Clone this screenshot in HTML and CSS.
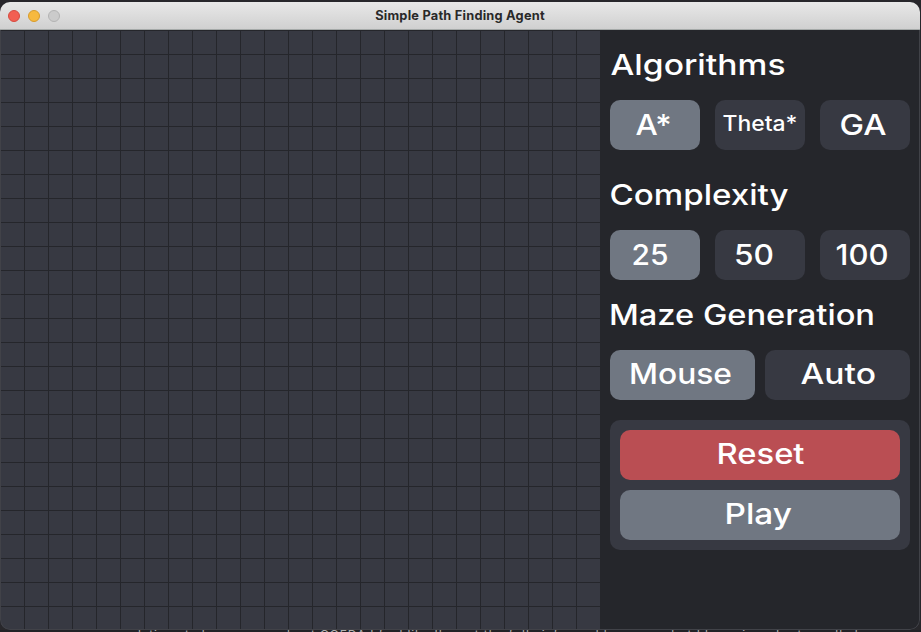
FILE: index.html
```html
<!DOCTYPE html>
<html lang="en">
<head>
<meta charset="utf-8">
<title>Simple Path Finding Agent</title>
<link rel="stylesheet" href="styles.css">
</head>
<body>
<div class="window">
  <header class="titlebar">
    <div class="lights"><i class="light close"></i><i class="light minimize"></i><i class="light"></i></div>
    <h1>Simple Path Finding Agent</h1>
  </header>
  <main>
    <div class="maze"></div>
    <aside>
      <svg class="heading"><text x="0.5" y="45" textLength="175" lengthAdjust="spacingAndGlyphs">Algorithms</text></svg>
      <div class="row">
        <button class="active"><svg><text x="25.5" y="35" textLength="36" lengthAdjust="spacingAndGlyphs">A*</text></svg></button>
        <button><svg class="small"><text x="7.5" y="31" textLength="75" lengthAdjust="spacingAndGlyphs">Theta*</text></svg></button>
        <button><svg><text x="19.5" y="35" textLength="47" lengthAdjust="spacingAndGlyphs">GA</text></svg></button>
      </div>
      <svg class="heading tall"><text x="-0.5" y="55" textLength="179" lengthAdjust="spacingAndGlyphs">Complexity</text></svg>
      <div class="row">
        <button class="active"><svg><text x="21.5" y="35" textLength="37" lengthAdjust="spacingAndGlyphs">25</text></svg></button>
        <button><svg><text x="19" y="35" textLength="40" lengthAdjust="spacingAndGlyphs">50</text></svg></button>
        <button><svg><text x="15.5" y="35" textLength="53" lengthAdjust="spacingAndGlyphs">100</text></svg></button>
      </div>
      <svg class="heading"><text x="-1" y="45" textLength="266" lengthAdjust="spacingAndGlyphs">Maze Generation</text></svg>
      <div class="row pair">
        <button class="active"><svg><text x="19" y="34" textLength="103" lengthAdjust="spacingAndGlyphs">Mouse</text></svg></button>
        <button><svg><text x="35.5" y="34" textLength="75.5" lengthAdjust="spacingAndGlyphs">Auto</text></svg></button>
      </div>
      <div class="actions">
        <button class="reset"><svg><text x="96.5" y="34" textLength="88" lengthAdjust="spacingAndGlyphs">Reset</text></svg></button>
        <button class="active"><svg><text x="104.5" y="34" textLength="67.5" lengthAdjust="spacingAndGlyphs">Play</text></svg></button>
      </div>
    </aside>
  </main>
</div>
<div class="behind"><svg><text x="125" y="9" textLength="190">relations to how we are about</text><text x="320" y="9" textLength="567">GGEDA I feel like I'm not the fully informed here now, but I learn in order to really learn</text></svg></div>
</body>
</html>
```
FILE: styles.css
```css
* { box-sizing: border-box; }
body {
  margin: 0;
  width: 921px;
  height: 632px;
  padding-top: 2px;
  overflow: hidden;
  background: #28272b;
  font-family: Inter, "Liberation Sans", sans-serif;
}
.window {
  width: 920px;
  height: 628px;
  border-radius: 10px;
  overflow: hidden;
  background: #25262b;
  position: relative;
}
.window::after {
  content: "";
  position: absolute;
  inset: 28px 0 0;
  border: 1px solid #414248;
  border-top: 0;
  border-radius: 0 0 10px 10px;
}
.titlebar {
  height: 28px;
  display: grid;
  grid-template-columns: 60px 1fr 60px;
  align-items: center;
  background: linear-gradient(#e8e8e8, #d0d0d0);
  border-bottom: 1px solid #a5a9a8;
}
.lights { display: flex; gap: 8px; padding-left: 8px; }
.light {
  flex: none;
  width: 12px;
  height: 12px;
  border-radius: 50%;
  background: #cbcbcb;
  border: 1px solid #b3b3b3;
}
.close { background: #f25f52; border-color: #d54b40; }
.minimize { background: #f6b940; border-color: #d79b2d; }
h1 {
  margin: 0;
  text-align: center;
  font-size: 12.8px;
  letter-spacing: 0.22px;
  font-weight: 700;
  color: #292929;
}
main { display: flex; height: 600px; }
.maze {
  width: 600px;
  background-color: #373942;
  background-image:
    linear-gradient(#25262b 1px, transparent 1px),
    linear-gradient(90deg, #25262b 1px, transparent 1px);
  background-size: 24px 24px;
}
aside { width: 320px; padding: 0 10px; }
svg { display: block; width: 100%; height: 50px; overflow: visible; }
text {
  fill: #fff;
  font-size: 29px;
  font-weight: 500;
}
.heading { height: 70px; }
.tall { height: 80px; }
.small text { font-size: 21.5px; }
.row { display: grid; grid-template-columns: repeat(3, 90px); gap: 15px; }
.pair { grid-template-columns: repeat(2, 145px); gap: 10px; }
button {
  display: block;
  width: 100%;
  height: 50px;
  padding: 0;
  border: 0;
  border-radius: 10px;
  background: #373942;
  font: inherit;
}
.active { background: #707782; }
.reset { background: #ba4e53; }
.actions {
  display: grid;
  gap: 10px;
  margin-top: 20px;
  padding: 10px;
  background: #373942;
  border-radius: 10px;
}
.behind { height: 2px; overflow: hidden; background: #222226; }
.behind text { font-size: 12px; font-weight: 400; fill: #b0b0b0; }
```
